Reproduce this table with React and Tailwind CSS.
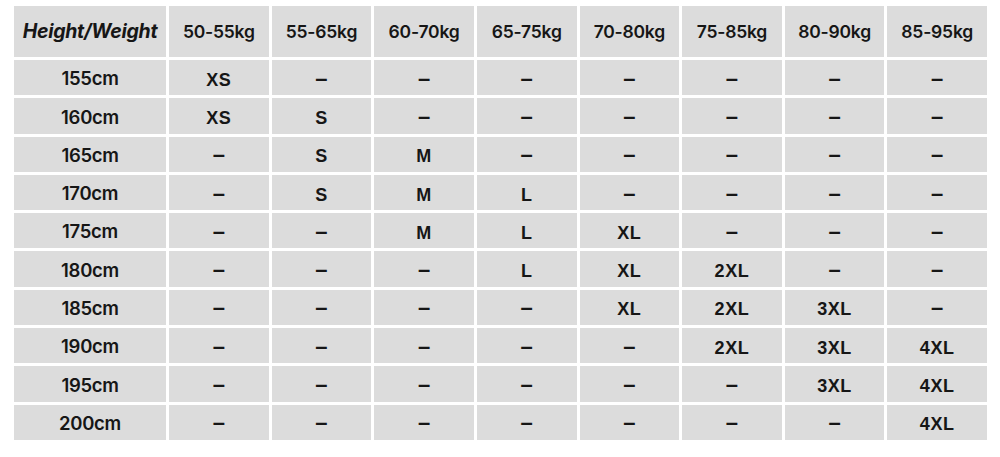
const weights = ["50-55kg", "55-65kg", "60-70kg", "65-75kg", "70-80kg", "75-85kg", "80-90kg", "85-95kg"];

const rows = [
  ["155cm", ["XS", "", "", "", "", "", "", ""]],
  ["160cm", ["XS", "S", "", "", "", "", "", ""]],
  ["165cm", ["", "S", "M", "", "", "", "", ""]],
  ["170cm", ["", "S", "M", "L", "", "", "", ""]],
  ["175cm", ["", "", "M", "L", "XL", "", "", ""]],
  ["180cm", ["", "", "", "L", "XL", "2XL", "", ""]],
  ["185cm", ["", "", "", "", "XL", "2XL", "3XL", ""]],
  ["190cm", ["", "", "", "", "", "2XL", "3XL", "4XL"]],
  ["195cm", ["", "", "", "", "", "", "3XL", "4XL"]],
  ["200cm", ["", "", "", "", "", "", "", "4XL"]],
];

export default function App() {
  return (
    <div className="h-[457px] w-[1000px] bg-white pl-[14px] pt-[6px] text-[#161616]">
      <div className="grid w-[973px] grid-cols-[152px_repeat(8,1fr)] gap-[3px]">
        {/* header */}
        <div className="flex h-[51px] items-center justify-center bg-[#dcdcdc] pt-[1px] font-['Inter',sans-serif] text-[19.5px] font-bold italic tracking-[-0.3px]">
          Height/Weight
        </div>
        {weights.map((w) => (
          <div key={w} className="flex h-[51px] items-center justify-center bg-[#dcdcdc] pt-[1px] font-['Inter',sans-serif] text-[17.5px] font-semibold tracking-[-0.2px]">
            {w}
          </div>
        ))}

        {rows.map(([h, cells]) => (
          <>
            <div key={h} className="flex h-[35.3px] items-center justify-center bg-[#dcdcdc] pt-[3px] font-['Inter',sans-serif] text-[18.5px] font-semibold tracking-[-0.3px]">
              {h}
            </div>
            {cells.map((c, i) =>
              c ? (
                <div key={h + i} className="flex h-[35.3px] items-center justify-center bg-[#dcdcdc] pt-[5px] font-['Liberation_Sans',Arial,sans-serif] text-[18px] font-bold tracking-[0.6px]">
                  {c}
                </div>
              ) : (
                <div key={h + i} className="flex h-[35.3px] items-center justify-center bg-[#dcdcdc] pt-[1px] font-['Liberation_Sans',Arial,sans-serif] text-[22px] font-bold">
                  –
                </div>
              )
            )}
          </>
        ))}
      </div>
    </div>
  );
}
